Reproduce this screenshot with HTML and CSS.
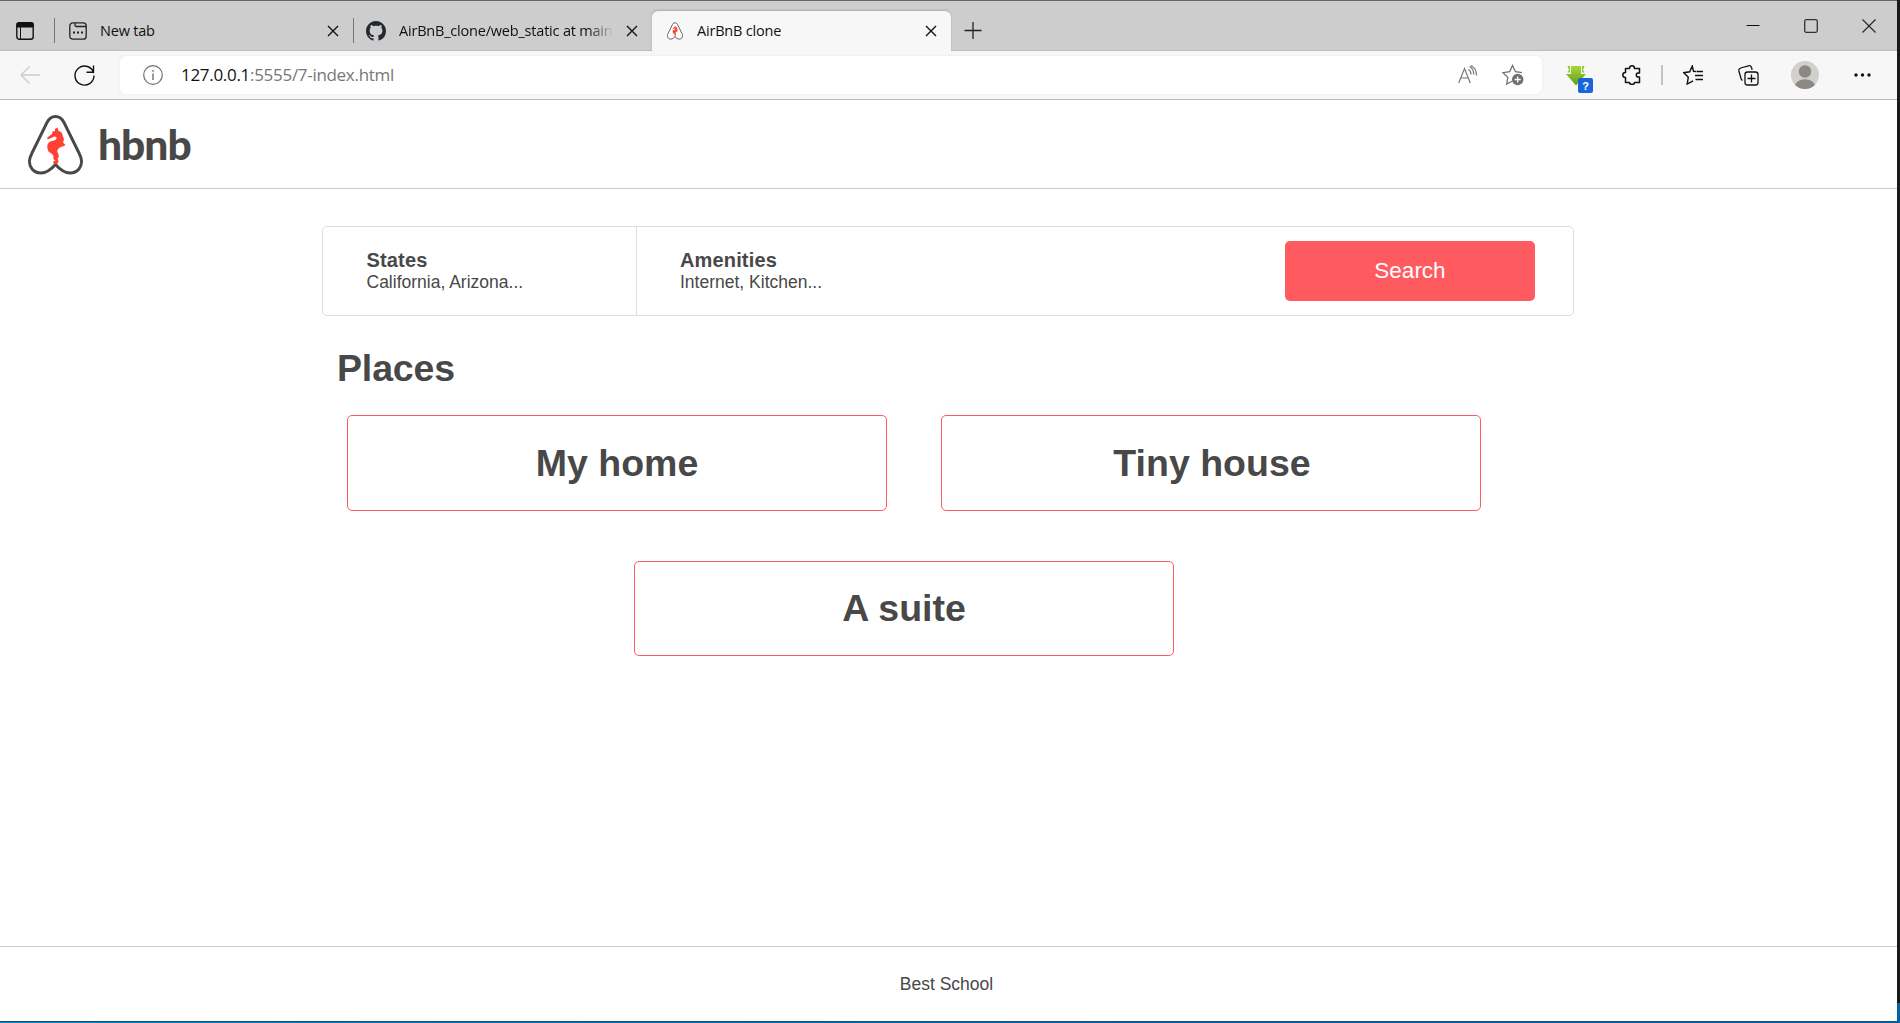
FILE: index.html
```html
<!DOCTYPE html>
<html lang="en">
<head>
<meta charset="utf-8">
<title>AirBnB clone</title>
<link rel="stylesheet" href="styles.css">
</head>
<body>
<svg width="0" height="0" class="defs">
  <symbol id="x" viewBox="0 0 12 12"><path d="M1 1l10 10M11 1L1 11" fill="none" stroke="currentColor" stroke-width="1.4"/></symbol>
  <symbol id="logo" viewBox="0 0 55 60">
    <path d="M27.500 49.500Q20 58 13 58C5 58 1 51.500 1.500 45.500Q1.800 42.500 4 38L19 7.500Q22 1.500 27.500 1.500T36 7.500L51 38Q53.200 42.500 53.500 45.500C54 51.500 50 58 42 58Q35 58 27.500 49.500Z" fill="#fff" stroke="#484848" stroke-width="2.900"/>
    <path d="M29.500 12.500L30.500 16Q34 16.500 34.500 20L36 24.500 35 27.500 37.500 30 35 31.500Q31.500 31.500 29.500 35Q28.500 37 30.500 39.500Q31.500 42 29.500 43.500Q31.500 47 29 49Q26 50 25 47.500Q25 45.500 27.500 46Q24.500 44 25.500 41Q24 38.500 20.500 36.500Q18.500 32.500 19.500 29.500Q21 26 26 25.500Q29 24.500 28.500 22.500Q26.500 20.500 24.500 22.500L19.500 24.500 19.300 22.500 24 19 24.500 16.500 27 16 27 14Z" fill="#ff4033"/>
  </symbol>
</svg>
<div class="desktop">
<div class="window">
  <div class="tabstrip">
    <svg class="tabmenu" width="18" height="18" viewBox="0 0 18 18"><rect x=".8" y=".8" width="16.400" height="16.400" rx="2.500" fill="none" stroke="#111" stroke-width="1.400"/><path d="M1 1h16v4H1zM4.500 5v12" fill="#111" stroke="#111"/></svg>
    <i class="sep"></i>
    <div class="tab tab-new">
      <svg width="18" height="18" viewBox="0 0 18 18"><rect x=".8" y=".8" width="16.400" height="16.400" rx="3" fill="none" stroke="#222" stroke-width="1.300"/><path d="M6 1v2q0 1.500 1.500 1.500H17" fill="none" stroke="#222" stroke-width="1.300"/><path d="M4 9.500h2v2H4zM8 9.500h2v2H8zM12 9.500h2v2h-2z" fill="#222"/></svg>
      <span class="label">New tab</span>
      <svg class="close" width="12" height="12"><use href="#x"/></svg>
    </div>
    <i class="sep"></i>
    <div class="tab tab-git">
      <svg width="20" height="20" viewBox="0 0 16 16"><path fill="#24292f" d="M8 0C3.580 0 0 3.580 0 8c0 3.540 2.290 6.530 5.470 7.590.4.070.55-.17.55-.38 0-.19-.01-.82-.01-1.490-2.010.37-2.530-.49-2.690-.94-.09-.23-.48-.94-.82-1.130-.28-.15-.68-.52-.01-.53.63-.01 1.080.58 1.230.82.72 1.210 1.870.87 2.330.66.070-.52.28-.87.51-1.070-1.780-.2-3.640-.89-3.640-3.950 0-.87.31-1.590.82-2.150-.08-.2-.36-1.020.08-2.120 0 0 .67-.21 2.200.82.64-.18 1.320-.27 2-.27s1.360.09 2 .27c1.530-1.040 2.200-.82 2.200-.82.44 1.100.16 1.920.08 2.120.51.56.82 1.270.82 2.150 0 3.070-1.870 3.750-3.650 3.950.29.25.54.73.54 1.480 0 1.070-.01 1.930-.01 2.200 0 .21.15.46.55.38A8.010 8.010 0 0 0 16 8c0-4.420-3.580-8-8-8z"/></svg>
      <span class="label fade">AirBnB_clone/web_static at main</span>
      <svg class="close" width="12" height="12"><use href="#x"/></svg>
    </div>
    <div class="tab tab-active">
      <svg width="16" height="18"><use href="#logo"/></svg>
      <span class="label">AirBnB clone</span>
      <svg class="close" width="12" height="12"><use href="#x"/></svg>
    </div>
    <svg class="plus" width="18" height="18" viewBox="0 0 18 18"><path d="M9 0v17M.5 8.500h17" stroke="#222" stroke-width="1.300"/></svg>
    <div class="controls">
      <svg width="14" height="14" viewBox="0 0 14 14"><path d="M.5 6.500h13" stroke="#111"/></svg>
      <svg width="14" height="14" viewBox="0 0 14 14"><rect x=".7" y=".7" width="12.600" height="12.600" rx="1.500" fill="none" stroke="#333" stroke-width="1.300"/></svg>
      <svg width="14" height="14" viewBox="0 0 14 14"><path d="M.5.5l13 13M13.500.5l-13 13" stroke="#222" stroke-width="1.100"/></svg>
    </div>
  </div>

  <div class="toolbar">
    <svg class="back" width="20" height="18" viewBox="0 0 20 18"><path d="M9.500.5L1 9l8.500 8.500M1 9h19" fill="none" stroke="#ccc" stroke-width="1.300"/></svg>
    <svg class="reload" width="21" height="21" viewBox="0 0 21 21"><path d="M19.700 8.200A9.500 9.500 0 1 0 20 10.500M19.500.5v6.700h-7" fill="none" stroke="#111" stroke-width="1.400"/></svg>
    <div class="address">
      <svg width="20" height="20" viewBox="0 0 20 20"><circle cx="10" cy="10" r="9.300" fill="none" stroke="#707070" stroke-width="1.200"/><path d="M10 8.500v6.500M10 5v1.700" stroke="#707070" stroke-width="1.400"/></svg>
      <span class="url"><b>127.0.0.1</b>:5555/7-index.html</span>
      <svg class="read" width="20" height="20" viewBox="0 0 20 20"><path d="M.7 18L6.500 3.500 12.300 18M2.700 13h7.600M10.500 4.500q2.500 1.500 2.500 5M11.500 1.500q4.200 2 4.200 8M12.700.5Q18.500 3 18.500 10.500" fill="none" stroke="#777" stroke-width="1.200"/></svg>
      <svg class="star" width="22" height="22" viewBox="0 0 22 22"><path d="M10.500 17l-5.800 3 1.100-6.600L1 8.700l6.600-1L10.500 1.500l3 6.200 6.500 1" fill="none" stroke="#707070" stroke-width="1.300"/><circle cx="15.700" cy="15.500" r="5.700" fill="#707070"/><path d="M15.700 12.500v6M12.700 15.500h6" stroke="#fff" stroke-width="1.300"/></svg>
    </div>
    <div class="download">
      <svg width="20" height="21" viewBox="0 0 20 21"><defs><linearGradient id="g" x2="0" y2="1"><stop stop-color="#a9d63a"/><stop offset="1" stop-color="#5f9f18"/></linearGradient></defs><path d="M5 1h10v8h5L10 20.500 0 9h5z" fill="url(#g)"/><path d="M1.500 1H4v6.500H1.500L3 5zM16 1h2.500L17 5l1.500 2.500H16z" fill="#94c733"/></svg>
      <span class="badge">?</span>
    </div>
    <svg class="puzzle" width="20" height="20" viewBox="0 0 20 20"><path d="M3.500 3.500h4Q7.500.8 10 .8t2.500 2.700h5V8q-3.200-.5-3.200 2t3.200 2v5.500h-5Q12.500 19.400 10 19.400t-2.500-1.900h-4v-5Q.8 12.500.8 10t2.700-2.500z" fill="none" stroke="#111" stroke-width="1.500" stroke-linejoin="round"/></svg>
    <i class="toolsep"></i>
    <svg class="favs" width="21" height="20" viewBox="0 0 21 20"><path d="M13 6.500l-2.500-.2L9.300 1 6.700 6.800.8 7.700l4.500 4.500L4.200 19l5.900-3.200M13.500 6.500H20M12 10.500h8M12.500 14.500H20" fill="none" stroke="#111" stroke-width="1.400"/></svg>
    <svg class="collect" width="21" height="21" viewBox="0 0 21 21"><rect x="7" y="7" width="13" height="13" rx="2.500" fill="none" stroke="#111" stroke-width="1.300"/><path d="M13.500 9.500v8M9.500 13.500h8M4.500 15.500Q3.500 15 3 13.500L.9 6Q.4 3.700 2.700 3L10.500.8Q12.800.3 13.500 2.500l.7 2.200" fill="none" stroke="#111" stroke-width="1.300"/></svg>
    <svg class="user" width="28" height="28" viewBox="0 0 28 28"><defs><clipPath id="c"><circle cx="14" cy="14" r="14"/></clipPath></defs><g clip-path="url(#c)"><path d="M0 0h28v28H0z" fill="#d2d0cc"/><circle cx="14" cy="10.500" r="6.200" fill="#8c8885"/><ellipse cx="14" cy="25.500" rx="10" ry="7.300" fill="#8c8885"/></g></svg>
    <svg class="more" width="17" height="4" viewBox="0 0 17 4"><path d="M.3 2a1.700 1.700 0 1 0 3.400 0a1.700 1.700 0 1 0-3.400 0M6.800 2a1.700 1.700 0 1 0 3.400 0a1.700 1.700 0 1 0-3.400 0M13.300 2a1.700 1.700 0 1 0 3.400 0a1.700 1.700 0 1 0-3.400 0" fill="#111"/></svg>
  </div>

  <header>
    <svg width="55" height="60"><use href="#logo"/></svg>
    <span class="brand">hbnb</span>
  </header>

  <main>
    <section class="filters">
      <div class="filter states"><h3>States</h3><h4>California, Arizona...</h4></div>
      <div class="filter"><h3>Amenities</h3><h4>Internet, Kitchen...</h4></div>
      <button>Search</button>
    </section>
    <section class="places">
      <h1>Places</h1>
      <div class="cards">
        <article>My home</article>
        <article class="tiny">Tiny house</article>
      </div>
      <div class="cards last"><article>A suite</article></div>
    </section>
  </main>

  <footer>Best School</footer>
</div>
<div class="edge"></div>
</div>
</body>
</html>
```
FILE: styles.css
```css
* { box-sizing: border-box; }
body { margin: 0; overflow: hidden; color: #484848; font: 17.5px/20px "Liberation Sans", Arial, sans-serif; }
h1, h3, h4 { margin: 0; }
svg { flex: none; display: block; }
.defs { position: absolute; }
.desktop { height: 1023px; display: grid; grid-template-columns: 1897px 3px; background: linear-gradient(90deg, #0088c4, #0063a8 60%); }
.window { height: 1021px; display: flex; flex-direction: column; background: #fff; box-shadow: 0 1px #1c4f72; }
.edge { height: 1003px; background: #191919; }

/* Tab strip */
.tabstrip { height: 51px; flex: none; display: flex; align-items: center; background: #cdcdcd; border-top: 1px solid #666; border-bottom: 1px solid #bcbcbc; padding: 10px 0 0 16px; color: #111; font: 15px/20px "Open Sans", "Noto Sans", sans-serif; }
.tabmenu { margin-right: 20px; }
.sep { width: 1px; height: 25px; background: #777; }
.tab { display: flex; align-items: center; height: 39px; }
.label { white-space: nowrap; overflow: hidden; font-size: 14.5px; letter-spacing: -.2px; }
.close { margin-left: auto; }
.tab-new { width: 298px; padding: 0 14px; }
.tab-new .label { margin-left: 13px; }
.tab-git { width: 298px; padding: 0 14px 0 12px; }
.tab-git .label { width: 215px; margin-left: 13px; }
.fade { -webkit-mask-image: linear-gradient(90deg, #000 88%, transparent); mask-image: linear-gradient(90deg, #000 88%, transparent); }
.tab-active { width: 299px; height: 41px; margin-bottom: -2px; padding: 0 14px 2px 15px; background: #f7f7f7; border-radius: 6px 6px 0 0; box-shadow: 0 -1px 2px #aaa; }
.tab-active .label { margin-left: 14px; }
.plus { margin-left: 13px; }
.controls { display: flex; gap: 44px; margin: -10px 21px 0 auto; }

/* Address bar */
.toolbar { height: 49px; flex: none; display: flex; align-items: center; background: #f7f7f7; border-bottom: 1px solid #bbb; padding-left: 20px; position: relative; }
.reload { margin-left: 34px; }
.address { width: 1422px; height: 38px; margin-left: 25px; padding: 0 18px 0 23px; display: flex; align-items: center; background: #fff; border-radius: 6px; box-shadow: 0 0 3px #e4e4e4; }
.url { margin-left: 18px; color: #767676; font: 17px/24px "Open Sans", "Noto Sans", sans-serif; letter-spacing: -.3px; }
.url b { color: #111; font-weight: 400; }
.read { margin-left: auto; }
.star { margin-left: 24px; }
.download { position: relative; margin-left: 24px; }
.badge { position: absolute; left: 12px; top: 13px; width: 15px; height: 15px; border-radius: 2px; background: #1a66d9; color: #fff; text-align: center; font: bold 11px/16px "Liberation Sans", sans-serif; }
.puzzle { margin-left: 36px; }
.toolsep { width: 2px; height: 20px; margin-left: 19px; background: #c4c4c4; }
.favs { margin-left: 20px; }
.collect { margin-left: 34px; }
.user { margin-left: 32px; }
.more { margin-left: 35px; }

/* Page */
header { height: 89px; flex: none; display: flex; align-items: center; padding: 1px 0 0 28px; border-bottom: 1px solid #ccc; }
.brand { margin: 0 0 1px 15px; font: 900 42.5px/50px Lato, sans-serif; letter-spacing: -1px; }
main { flex: 1; padding: 37px 323px 0 322px; }
.filters { height: 90px; display: flex; border: 1px solid #ddd; border-radius: 5px; }
.filter { padding: 22px 0 0 43px; }
.states { width: 314px; padding-left: 43.500px; border-right: 1px solid #ddd; }
h3 { font-size: 20px; line-height: 22px; letter-spacing: .15px; }
h4 { font-weight: 400; font-size: 17.5px; line-height: 22px; }
button { width: 250px; height: 60px; margin: 14px 38px 0 auto; border: 0; border-radius: 5px; background: #ff5a5f; color: #fff; font: 22.5px/60px "Liberation Sans", Arial, sans-serif; padding: 0 0 3px; }
h1 { padding: 30px 0 0 15px; font-size: 37.5px; line-height: 44px; letter-spacing: -.15px; }
.cards { display: flex; gap: 54px; padding: 25px 0 0 25px; }
article { width: 540px; height: 96px; border: 1px solid #ff5a5f; border-radius: 5px; text-align: center; font-size: 37.5px; font-weight: 700; line-height: 94px; }
.tiny { padding-left: 2px; }
.last { padding: 50px 0 0 312px; }
.last article { height: 95px; line-height: 92px; }
footer { height: 75px; flex: none; border-top: 1px solid #ccc; text-align: center; line-height: 74px; padding-right: 4px; }
```
